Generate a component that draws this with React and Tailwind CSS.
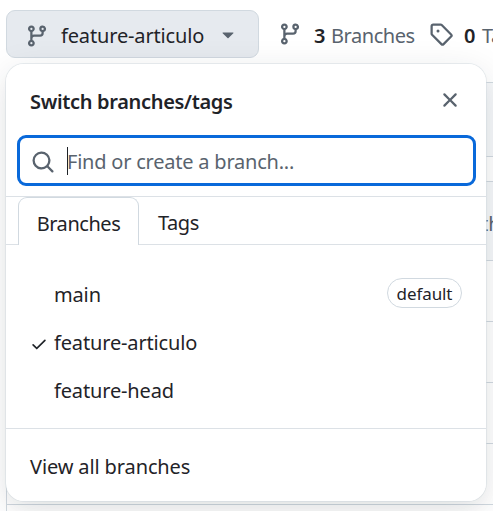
const ICONS = {
  branch:
    'M9.5 3.25a2.25 2.25 0 1 1 3 2.122V6A2.5 2.5 0 0 1 10 8.5H6a1 1 0 0 0-1 1v1.128a2.251 2.251 0 1 1-1.5 0V5.372a2.25 2.25 0 1 1 1.5 0v1.836A2.493 2.493 0 0 1 6 7h4a1 1 0 0 0 1-1v-.628A2.25 2.25 0 0 1 9.5 3.25Zm-6 0a.75.75 0 1 0 1.5 0 .75.75 0 0 0-1.5 0Zm8.25-.75a.75.75 0 1 0 0 1.5.75.75 0 0 0 0-1.5ZM4.25 12a.75.75 0 1 0 0 1.5.75.75 0 0 0 0-1.5Z',
  tag: 'M1 7.775V2.75C1 1.784 1.784 1 2.75 1h5.025c.464 0 .91.184 1.238.513l6.25 6.25a1.75 1.75 0 0 1 0 2.474l-5.026 5.026a1.75 1.75 0 0 1-2.474 0l-6.25-6.25A1.752 1.752 0 0 1 1 7.775Zm1.5 0c0 .066.026.13.073.177l6.25 6.25a.25.25 0 0 0 .354 0l5.025-5.025a.25.25 0 0 0 0-.354l-6.25-6.25a.25.25 0 0 0-.177-.073H2.75a.25.25 0 0 0-.25.25ZM6 5a1 1 0 1 1 0 2 1 1 0 0 1 0-2Z',
  search:
    'M10.68 11.74a6 6 0 0 1-7.922-8.982 6 6 0 0 1 8.982 7.922l3.04 3.04a.749.749 0 0 1-.326 1.275.749.749 0 0 1-.734-.215ZM11.5 7a4.499 4.499 0 1 0-8.997 0A4.499 4.499 0 0 0 11.5 7Z',
  close:
    'M3.72 3.72a.75.75 0 0 1 1.06 0L8 6.94l3.22-3.22a.749.749 0 0 1 1.275.326.749.749 0 0 1-.215.734L9.06 8l3.22 3.22a.749.749 0 0 1-.326 1.275.749.749 0 0 1-.734-.215L8 9.06l-3.22 3.22a.751.751 0 0 1-1.042-.018.751.751 0 0 1-.018-1.042L6.94 8 3.72 4.78a.75.75 0 0 1 0-1.06Z',
  check:
    'M13.78 4.22a.75.75 0 0 1 0 1.06l-7.25 7.25a.75.75 0 0 1-1.06 0L2.22 9.28a.751.751 0 0 1 .018-1.042.751.751 0 0 1 1.042-.018L6 10.94l6.72-6.72a.75.75 0 0 1 1.06 0Z',
  caret:
    'm4.427 7.427 3.396 3.396a.25.25 0 0 0 .354 0l3.396-3.396A.25.25 0 0 0 11.396 7H4.604a.25.25 0 0 0-.177.427Z',
};

function Icon({ name, className = 'size-6 text-[#59636e]' }) {
  return (
    <svg viewBox="0 0 16 16" fill="currentColor" className={`shrink-0 ${className}`} aria-hidden="true">
      <path d={ICONS[name]} />
    </svg>
  );
}

function Toolbar() {
  return (
    <div className="flex pl-1.5 pt-2.5">
      <button className="flex h-12 w-[253px] shrink-0 items-center rounded-[9px] border border-[#d1d9e0] bg-[#e6eaef] pl-[18px]">
        <Icon name="branch" className="mt-1 size-6 text-[#59636e]" />
        <span className="ml-3 w-[155px] pt-1 text-left tracking-[-0.15px]">feature-articulo</span>
        <Icon name="caret" />
      </button>
      <div className="ml-[19px] flex h-12 w-[151px] shrink-0 items-center">
        <Icon name="branch" />
        <b className="ml-3 w-[17px] pt-1 font-semibold">3</b>
        <span className="pt-1 tracking-[-0.45px] text-[#59636e]">Branches</span>
      </div>
      <div className="flex h-12 shrink-0 items-center">
        <Icon name="tag" />
        <b className="ml-[11px] w-[18px] pt-1 font-semibold">0</b>
        <span className="pt-1 tracking-[-0.45px] text-[#59636e]">Tags</span>
      </div>
    </div>
  );
}

function FileTable() {
  return (
    <div className="ml-1.5 mt-6 border-l border-[#d1d9e0]">
      <div className="h-[75px] border-y border-[#d1d9e0] bg-[#f6f8fa]" />
      <div className="mt-6 flex h-20 items-center justify-end border-y border-[#d1d9e0] bg-[#f6f8fa]">
        <span className="w-3 pt-[5px] text-[#59636e]">this</span>
      </div>
      <div className="h-[61px] border-b border-[#d1d9e0]" />
      <div className="h-[61px] border-b border-[#d1d9e0]" />
      <div className="h-[61px] border-b border-[#d1d9e0]" />
      <div className="h-[61px] border-b border-[#d1d9e0]" />
      <div className="h-[61px]" />
    </div>
  );
}

function BranchRow({ name, selected, badge }) {
  return (
    <div className="flex h-12 items-center pl-6 pr-6">
      <span className="flex w-6 shrink-0">
        {selected && <Icon name="check" className="mt-1.5 size-[18px] text-[#1f2328]" />}
      </span>
      <span className="flex-1 pt-[3px] tracking-[-0.15px]">{name}</span>
      {badge && (
        <span className="flex h-[30px] w-[75px] items-center justify-center rounded-full border border-[#d1d9e0] pt-px text-[17px] tracking-[-0.1px]">
          {badge}
        </span>
      )}
    </div>
  );
}

function BranchMenu() {
  return (
    <div className="absolute left-1.5 top-16 flex h-[437px] w-[480px] flex-col overflow-hidden rounded-[18px] bg-white">
      <div className="flex h-[71px] shrink-0 items-center justify-between pl-6 pr-6">
        <h2 className="pt-1 font-semibold tracking-[-0.33px]">Switch branches/tags</h2>
        <Icon name="close" />
      </div>
      <div className="ml-[11px] mr-[10px] flex h-[51px] shrink-0 items-center rounded-[9px] border-[3px] border-[#0969da] pl-[11px]">
        <Icon name="search" className="mt-0.5 size-6 text-[#59636e]" />
        <span className="ml-3 h-7 w-px bg-[#1f2328]" />
        <span className="-ml-px pt-0.5 tracking-[-0.22px] text-[#59636e]">Find or create a branch...</span>
      </div>
      <div className="mt-[10px] flex h-[49px] shrink-0 items-end border-y border-[#dce1e6] pl-3">
        <div className="-mb-px flex h-12 w-[121px] items-center justify-center rounded-t-[9px] border border-b-0 border-[#d1d9e0] bg-white pt-1 tracking-[-0.45px]">
          Branches
        </div>
        <div className="flex h-12 items-center pl-[19px] pt-[5px] tracking-[-0.45px]">Tags</div>
      </div>
      <div className="h-[183px] shrink-0 pt-6">
        <BranchRow name="main" badge="default" />
        <BranchRow name="feature-articulo" selected />
        <BranchRow name="feature-head" />
      </div>
      <div className="flex flex-1 items-center border-t border-[#dce1e6] pl-6 pt-1 tracking-[-0.12px]">
        View all branches
      </div>
    </div>
  );
}

export default function App() {
  return (
    <div className="relative h-[511px] w-[493px] overflow-hidden whitespace-nowrap bg-white font-['Noto_Sans',sans-serif] text-[20px] leading-[30px] text-[#1f2328]">
      <Toolbar />
      <FileTable />
      <div className="absolute left-1.5 top-16 h-[437px] w-[480px] rounded-[18px] shadow-[0_0_0_1px_#d1d9e080,0_9px_18px_-3px_#25292e0a,0_9px_36px_0_#25292e1f]" />
      <BranchMenu />
    </div>
  );
}
